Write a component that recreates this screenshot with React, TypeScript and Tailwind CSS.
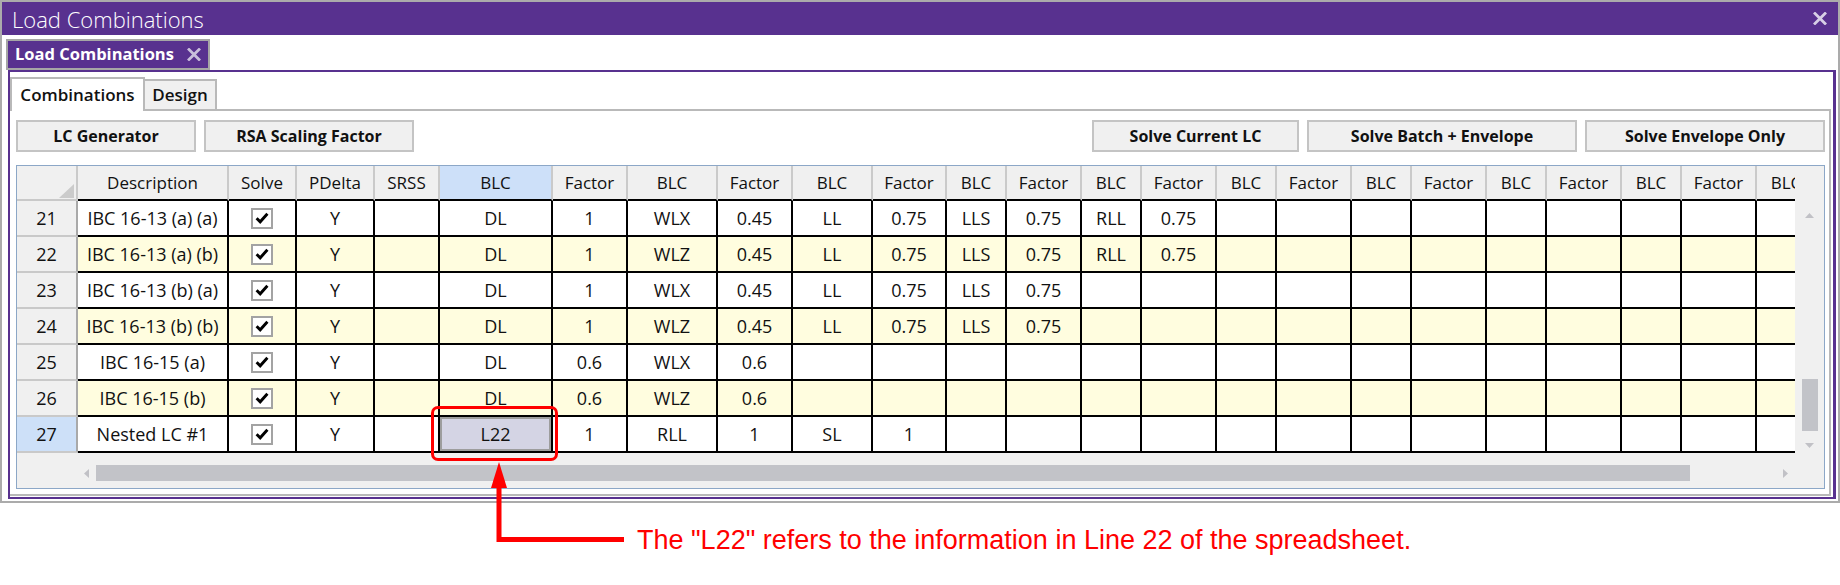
import React from "react";

type Row = { n: number; desc: string; vals: string[] };

const rows: Row[] = [
  { n: 21, desc: "IBC 16-13 (a) (a)", vals: ["DL", "1", "WLX", "0.45", "LL", "0.75", "LLS", "0.75", "RLL", "0.75"] },
  { n: 22, desc: "IBC 16-13 (a) (b)", vals: ["DL", "1", "WLZ", "0.45", "LL", "0.75", "LLS", "0.75", "RLL", "0.75"] },
  { n: 23, desc: "IBC 16-13 (b) (a)", vals: ["DL", "1", "WLX", "0.45", "LL", "0.75", "LLS", "0.75"] },
  { n: 24, desc: "IBC 16-13 (b) (b)", vals: ["DL", "1", "WLZ", "0.45", "LL", "0.75", "LLS", "0.75"] },
  { n: 25, desc: "IBC 16-15 (a)", vals: ["DL", "0.6", "WLX", "0.6"] },
  { n: 26, desc: "IBC 16-15 (b)", vals: ["DL", "0.6", "WLZ", "0.6"] },
  { n: 27, desc: "Nested LC #1", vals: ["L22", "1", "RLL", "1", "SL", "1"] },
];

// BLC / Factor pairs, last BLC is cut off by the scroll viewport
const pairWidths = [
  "w-[113px]", "w-[75px]", "w-[90px]", "w-[75px]", "w-[80px]", "w-[74px]",
  "w-[60px]", "w-[75px]", "w-[60px]", "w-[75px]", "w-[60px]", "w-[75px]",
  "w-[60px]", "w-[75px]", "w-[60px]", "w-[75px]", "w-[60px]", "w-[75px]", "w-[60px]",
];

const Close = ({ color }: { color: string }) => (
  <svg width="14" height="13" viewBox="0 0 14 13">
    <path d="M2 1.5 L12 11.5 M12 1.5 L2 11.5" stroke={color} strokeWidth="2.8" strokeLinecap="square" />
  </svg>
);

const Check = () => (
  <div className="w-[22px] h-[21px] border-2 border-[#a3a3a3] bg-white flex items-center justify-center">
    <svg width="14" height="12" viewBox="0 0 14 12">
      <path d="M1.6 6.2 L5.2 9.8 L12.4 1.8" stroke="#000" strokeWidth="2.9" fill="none" />
    </svg>
  </div>
);

const Head = ({ w, label, active }: { w: string; label: string; active?: boolean }) => (
  <div
    className={`${w} shrink-0 h-full flex items-center justify-center border-r-2 border-b-2 border-r-[#cacaca] border-b-black ${
      active ? "bg-[#cde0f9]" : "bg-[#f0f0f0]"
    }`}
  >
    {label}
  </div>
);

const Cell = ({ w, children }: { w: string; children?: React.ReactNode }) => (
  <div className={`${w} shrink-0 h-full flex items-center justify-center border-r-2 border-b-2 border-black`}>
    {children}
  </div>
);

const GridRow = ({ r, i }: { r: Row; i: number }) => {
  const last = r.n === 27;
  return (
    <div className={`flex h-[36px] text-[18px] ${i % 2 === 1 ? "bg-[#fffddf]" : "bg-white"}`}>
      <div
        className={`w-[61px] shrink-0 h-full flex items-center justify-center border-r-2 border-b-2 border-r-[#a9a9a9] border-b-[#c9c9c9] ${
          last ? "bg-[#cde0f8]" : "bg-[#f0f0f0]"
        }`}
      >
        {r.n}
      </div>
      <Cell w="w-[151px]">{r.desc}</Cell>
      <Cell w="w-[68px]">
        <Check />
      </Cell>
      <Cell w="w-[78px]">Y</Cell>
      <Cell w="w-[65px]" />
      {pairWidths.map((w, k) =>
        last && k === 0 ? (
          <div key={k} className={`${w} shrink-0 h-full border-r-2 border-b-2 border-black`}>
            <div className="w-full h-full border-2 border-[#9d9d9d] bg-[#d4d4e4] flex items-center justify-center">
              {r.vals[k]}
            </div>
          </div>
        ) : (
          <Cell key={k} w={w}>
            {r.vals[k] ?? ""}
          </Cell>
        )
      )}
    </div>
  );
};

const Button = ({ w, label }: { w: string; label: string }) => (
  <div
    className={`${w} h-full flex items-center justify-center bg-[#f0f0f0] border-2 border-[#c4c4c4] text-[16px] font-bold text-[#111]`}
  >
    {label}
  </div>
);

export default function App() {
  return (
    <div className="relative w-[1840px] h-[585px] bg-white overflow-hidden font-['Open_Sans',sans-serif] text-[#111]">
      {/* window */}
      <div className="h-[503px] border-2 border-[#ababab] flex flex-col">
        <div className="h-[33px] shrink-0 bg-[#58318f] flex items-center justify-between pl-[10px] pr-[11px]">
          <span className="text-white text-[22px] font-light leading-none">Load Combinations</span>
          <Close color="#d7cfe6" />
        </div>

        <div className="h-[35px] shrink-0 pt-[4px] pl-[4px]">
          <div className="w-[204px] h-[31px] border-2 border-[#a6a6a6] bg-[#58318f] flex items-center pl-[7px] gap-[13px]">
            <span className="text-white text-[16.5px] font-bold">Load Combinations</span>
            <Close color="#c9bfdc" />
          </div>
        </div>

        <div className="ml-[6px] mr-[2px] mb-[2px] h-[429px] border-2 border-r-[3px] border-[#58318f] flex flex-col">
          <div className="h-[37px] shrink-0 flex items-end">
            <div className="relative z-10 -mb-[2px] w-[135px] h-[34px] border-2 border-b-0 border-[#b9b9b9] bg-white flex items-center justify-center text-[17px] font-semibold">
              Combinations
            </div>
            <div className="w-[72px] h-[30px] border-2 border-l-0 border-b-0 border-[#b9b9b9] bg-[#f0f0f0] flex items-center justify-center text-[17px] font-semibold">
              Design
            </div>
          </div>

          <div className="mr-[2px] mb-[1px] flex-1 border-2 border-l-0 border-[#b9b9b9] pl-[6px] pr-[4px] pt-[9px] flex flex-col">
            <div className="h-[32px] shrink-0 flex gap-[8px]">
              <Button w="w-[180px]" label="LC Generator" />
              <Button w="w-[210px]" label="RSA Scaling Factor" />
              <div className="flex-1" />
              <Button w="w-[207px]" label="Solve Current LC" />
              <Button w="w-[270px]" label="Solve Batch + Envelope" />
              <Button w="w-[240px]" label="Solve Envelope Only" />
            </div>

            {/* spreadsheet */}
            <div className="mt-[13px] h-[324px] shrink-0 border border-[#8ca7c7] bg-[#f0f0f0] flex flex-col text-[17px]">
              <div className="flex h-[287px]">
                <div className="w-[1778px] shrink-0 overflow-hidden">
                  <div className="w-max">
                    <div className="flex h-[35px]">
                      <div className="relative w-[61px] shrink-0 h-full border-r-2 border-b-2 border-r-[#cacaca] border-b-[#c9c9c9] bg-[#f0f0f0]">
                        <svg className="absolute right-[2px] bottom-[1px]" width="15" height="14" viewBox="0 0 15 14">
                          <polygon points="15,0 15,14 0,14" fill="#cbcbcb" />
                        </svg>
                      </div>
                      <Head w="w-[151px]" label="Description" />
                      <Head w="w-[68px]" label="Solve" />
                      <Head w="w-[78px]" label="PDelta" />
                      <Head w="w-[65px]" label="SRSS" />
                      {pairWidths.map((w, k) => (
                        <Head key={k} w={w} label={k % 2 === 0 ? "BLC" : "Factor"} active={k === 0} />
                      ))}
                    </div>
                    {rows.map((r, i) => (
                      <GridRow key={r.n} r={r} i={i} />
                    ))}
                  </div>
                </div>
                {/* vertical scrollbar */}
                <div className="flex-1 flex flex-col items-center">
                  <div className="h-[35px] shrink-0" />
                  <svg className="mt-[12px]" width="9" height="5" viewBox="0 0 9 5">
                    <polygon points="4.5,0 9,5 0,5" fill="#c1c1c6" />
                  </svg>
                  <div className="mt-[161px] w-[16px] h-[52px] bg-[#c2c3c8]" />
                  <svg className="mt-[12px]" width="9" height="5" viewBox="0 0 9 5">
                    <polygon points="0,0 9,0 4.5,5" fill="#c1c1c6" />
                  </svg>
                </div>
              </div>
              {/* horizontal scrollbar */}
              <div className="h-[35px] shrink-0 pt-[12px]">
                <div className="h-[16px] flex items-center">
                  <svg className="ml-[67px]" width="5" height="9" viewBox="0 0 5 9">
                    <polygon points="5,0 5,9 0,4.5" fill="#c1c1c6" />
                  </svg>
                  <div className="ml-[7px] w-[1594px] h-[16px] bg-[#c2c3c8]" />
                  <svg className="ml-[93px]" width="5" height="9" viewBox="0 0 5 9">
                    <polygon points="0,0 5,4.5 0,9" fill="#c1c1c6" />
                  </svg>
                </div>
              </div>
            </div>
          </div>
        </div>
      </div>

      {/* annotation */}
      <div className="mt-[22px] pl-[637px] text-[27px] leading-[30px] text-[#ff0000] font-['Liberation_Sans',Arial,sans-serif]">
        The "L22" refers to the information in Line 22 of the spreadsheet.
      </div>
      <div className="absolute left-[431px] top-[406px] w-[127px] h-[55px] border-[3px] border-[#ff0000] rounded-[7px]" />
      <svg className="absolute left-[480px] top-[458px]" width="150" height="90" viewBox="0 0 150 90">
        <polygon points="19,4 27,30 11,30" fill="#ff0000" />
        <path d="M19 28 V81.5 H144" stroke="#ff0000" strokeWidth="5" fill="none" />
      </svg>
    </div>
  );
}
